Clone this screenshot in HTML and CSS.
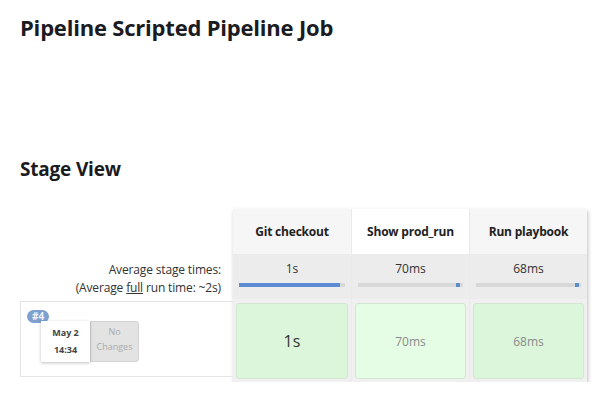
FILE: index.html
```html
<!DOCTYPE html>
<html>
<head>
<meta charset="utf-8">
<link rel="stylesheet" href="styles.css">
</head>
<body>
<h1 class="title">Pipeline Scripted Pipeline Job</h1>
<h2 class="section">Stage View</h2>
<div class="stage-view">
  <div class="left">
    <div class="left-head"></div>
    <div class="left-avg">
      <div>Average stage times:</div>
      <div>(Average <u>full</u> run time: ~2s)</div>
    </div>
    <div class="left-build">
      <span class="badge">#4</span>
      <div class="build-cards">
        <div class="date-card"><div>May 2</div><div>14:34</div></div>
        <div class="changes">No<br>Changes</div>
      </div>
    </div>
  </div>
  <div class="stages">
    <div class="col">
      <div class="head">Git checkout</div>
      <div class="avg"><div>1s</div><div class="bar"><div class="fill" style="width:95%"></div></div></div>
      <div class="cellwrap"><div class="cell big">1s</div></div>
    </div>
    <div class="col">
      <div class="head hover">Show prod_run</div>
      <div class="avg"><div>70ms</div><div class="bar"><div class="fill dot" style="width:4%;margin-left:93%"></div></div></div>
      <div class="cellwrap"><div class="cell small light">70ms</div></div>
    </div>
    <div class="col">
      <div class="head">Run playbook</div>
      <div class="avg"><div>68ms</div><div class="bar"><div class="fill dot" style="width:4%;margin-left:94%"></div></div></div>
      <div class="cellwrap"><div class="cell small">68ms</div></div>
    </div>
  </div>
</div>
</body>
</html>
```
FILE: styles.css
```css
* { box-sizing: border-box; }
body {
  margin: 0;
  padding: 0 0 0 20px;
  font-family: "Open Sans", "Noto Sans", sans-serif;
  color: #1b1b22;
  background: #fff;
}
.title {
  margin: 0;
  padding-top: 12px;
  font-size: 22px;
  font-weight: 700;
  line-height: 30px;
  letter-spacing: -0.2px;
}
.section {
  margin: 0;
  margin-top: 112px;
  font-size: 19px;
  font-weight: 700;
  line-height: 30px;
  letter-spacing: -0.2px;
}
.stage-view {
  display: flex;
  margin-top: 25px;
  font-size: 12px;
}
.left {
  width: 213px;
  display: flex;
  flex-direction: column;
}
.left-head { height: 45px; }
.left-avg {
  height: 47px;
  text-align: right;
  padding: 7px 12px 0 0;
  line-height: 18px;
  color: #333;
  letter-spacing: -0.15px;
}
.left-build {
  position: relative;
  height: 76px;
  border: 1px solid #e4e4e4;
  border-right: none;
  padding: 19px 0 0 20px;
}
.badge {
  position: absolute;
  left: 6px;
  top: 8px;
  background: #7da0cf;
  color: #eef3fa;
  font-size: 10px;
  font-weight: 700;
  line-height: 13px;
  padding: 0 5px;
  border-radius: 7px;
}
.build-cards { display: flex; }
.date-card {
  width: 49px;
  height: 41px;
  background: #fff;
  box-shadow: 0 1px 3px rgba(0,0,0,0.25);
  font-size: 9px;
  font-weight: 700;
  color: #444;
  text-align: center;
  line-height: 17px;
  padding-top: 3px;
  position: relative;
  z-index: 1;
}
.changes {
  width: 49px;
  height: 41px;
  background: #e3e3e3;
  border: 1px solid #d4d4d4;
  border-radius: 0 3px 3px 0;
  color: #aaa;
  font-size: 9px;
  text-align: center;
  line-height: 15px;
  padding-top: 2px;
}
.stages {
  display: flex;
  box-shadow: 1px 2px 4px rgba(0,0,0,0.25);
  align-self: flex-start;
}
.col {
  width: 118px;
  display: flex;
  flex-direction: column;
  border-left: 1px solid #eaeaea;
}
.col:first-child { border-left: none; }
.head {
  height: 45px;
  background: #f6f6f6;
  display: flex;
  align-items: center;
  justify-content: center;
  font-weight: 700;
  font-size: 12px;
  color: #222;
  letter-spacing: -0.2px;
}
.head.hover { background: #fff; }
.avg {
  height: 45px;
  background: #ececec;
  text-align: center;
  padding-top: 6px;
  line-height: 18px;
  color: #333;
}
.bar {
  margin: 5px 6px 0;
  height: 4px;
  background: #d8d8d8;
  display: flex;
}
.fill {
  height: 4px;
  background: #5b8bd1;
}
.fill.dot { background: #5c8ec8; }
.cellwrap {
  height: 83px;
  background: #f0f0f0;
  padding: 4px 3px 3px;
}
.cell {
  height: 100%;
  background: #dcf6dc;
  border: 1px solid #d2e6d2;
  border-radius: 3px;
  display: flex;
  align-items: center;
  justify-content: center;
}
.cell.light { background: #e5fde5; }
.big { font-size: 16px; color: #333; }
.small { font-size: 12px; color: #8a8a8a; }
```
